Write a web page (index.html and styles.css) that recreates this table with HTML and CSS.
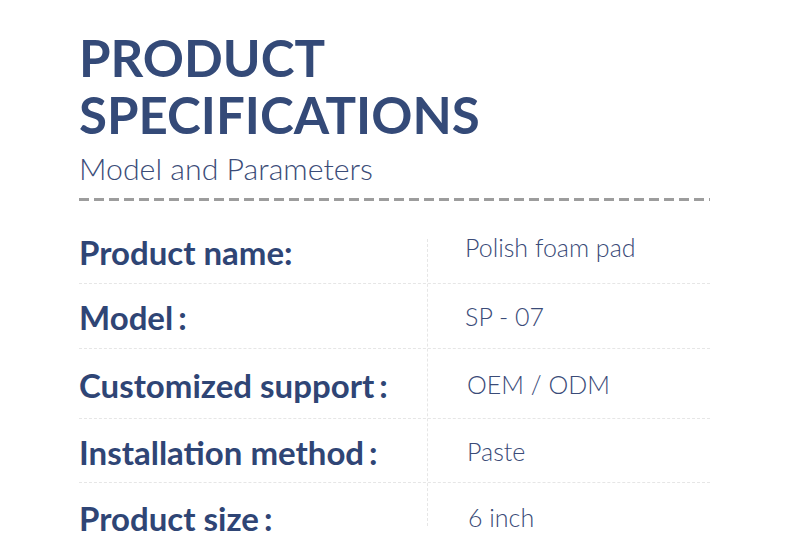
FILE: index.html
```html
<!DOCTYPE html>
<html>
<head>
<meta charset="utf-8">
<link rel="stylesheet" href="styles.css">
</head>
<body>
<div class="page">
  <header class="head">
    <h1 class="title">PRODUCT<br>SPECIFICATIONS</h1>
    <p class="subtitle">Model and Parameters</p>
    <div class="rule"></div>
  </header>
  <div class="specs">
    <div class="row r1"><div class="label">Product name:</div><div class="value">Polish foam pad</div></div>
    <div class="row r2"><div class="label">Model<span class="colon">:</span></div><div class="value">SP - 07</div></div>
    <div class="row r3"><div class="label">Customized support<span class="colon">:</span></div><div class="value v2">OEM / ODM</div></div>
    <div class="row r4"><div class="label">Installation method<span class="colon">:</span></div><div class="value v1">Paste</div></div>
    <div class="row r5"><div class="label">Product size<span class="colon">:</span></div><div class="value v3">6 inch</div></div>
  </div>
</div>
</body>
</html>
```
FILE: styles.css
```css
html, body { margin: 0; padding: 0; background: #fff; }
.page { width: 790px; height: 557px; overflow: hidden; padding-left: 79px; box-sizing: border-box; font-family: "Lato", "Open Sans", sans-serif; color: #334a78; }
.head { padding-top: 29px; }
.title { margin: 0; font-size: 51px; line-height: 57px; font-weight: 700; color: #344a78; letter-spacing: 0; }
.subtitle { margin: 5px 0 0 0; font-size: 30.3px; line-height: 40px; font-weight: 300; color: #3b4c78; }
.rule { margin-top: 10px; width: 631px; height: 3px; background: repeating-linear-gradient(90deg, #9d9d9d 0 10px, transparent 10px 15px); }
.specs { position: relative; margin-top: 18px; width: 631px; }
.specs::before { content: ""; position: absolute; left: 348px; top: 20px; height: 287px; border-left: 1px dashed #e6e6e6; }
.row { display: grid; grid-template-columns: 348px 1fr; height: 65px; border-bottom: 1px dashed #e6e6e6; box-sizing: border-box; }
.r1 { height: 65px; }
.r2 { height: 65px; }
.r3 { height: 70px; }
.r4 { height: 64px; }
.r5 { height: 68px; border-bottom: none; }
.label { font-size: 33px; font-weight: 700; color: #2f4575; display: flex; align-items: center; padding-top: 2px; }
.colon { margin-left: 5px; }
.value { font-size: 25px; font-weight: 300; color: #3a4b78; padding-left: 38px; display: flex; align-items: center; }
.r1 .value { padding-bottom: 8px; }
.v2, .v1 { padding-left: 40px; }
.v3 { padding-left: 41px; }
```
